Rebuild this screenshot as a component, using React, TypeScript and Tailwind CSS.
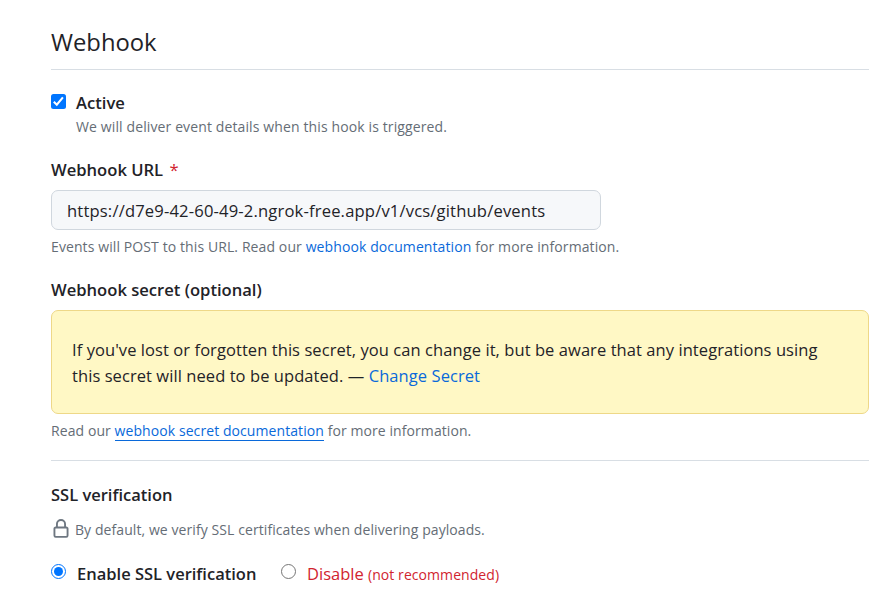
import React from "react";

function Link({ children, underlined = false }: { children: React.ReactNode; underlined?: boolean }) {
  return (
    <a className={underlined ? "inline-block h-[21px] border-b border-[#0969da] text-[#0969da]" : "text-[#0969da]"}>
      {children}
    </a>
  );
}

function LockIcon() {
  return (
    <svg width="20" height="20" viewBox="0 0 16 16" fill="#6e7781" className="shrink-0">
      <path d="M4 4a4 4 0 0 1 8 0v2h.25c.966 0 1.75.784 1.75 1.75v5.5A1.75 1.75 0 0 1 12.25 15h-8.5A1.75 1.75 0 0 1 2 13.25v-5.5C2 6.784 2.784 6 3.75 6H4Zm8.25 3.5h-8.5a.25.25 0 0 0-.25.25v5.5c0 .138.112.25.25.25h8.5a.25.25 0 0 0 .25-.25v-5.5a.25.25 0 0 0-.25-.25ZM10.5 6V4a2.5 2.5 0 1 0-5 0v2Z" />
    </svg>
  );
}

export default function App() {
  return (
    <main className="h-[595px] w-[876px] overflow-hidden bg-white pl-[51px] pr-[7px] font-['Open_Sans','Noto_Sans',sans-serif] font-normal whitespace-nowrap text-[#1f2328]">
      <h1 className="h-[70px] border-b border-[#d8dee4] pt-[26px] text-[23.8px] leading-[32px] font-normal">Webhook</h1>

      <div className="flex pt-[20px]">
        <span className="mt-[4px] flex size-[15px] shrink-0 items-center justify-center rounded-[2.5px] bg-[#0075ff]">
          <svg width="15" height="15" viewBox="0 0 15 15" fill="none" stroke="white" strokeWidth="2.1">
            <path d="M2.8 7.8 5.8 10.7 11.9 3.4" />
          </svg>
        </span>
        <div className="ml-[10px]">
          <div className="h-[26px] text-[16.6px] leading-[26px] font-semibold">Active</div>
          <div className="h-[22px] text-[14px] leading-[22px] tracking-[0.12px] text-[#656d76]">We will deliver event details when this hook is triggered.</div>
        </div>
      </div>

      <div className="mt-[19px] h-[26px] text-[16.6px] leading-[26px] font-semibold">
        Webhook URL <span className="ml-[2px] font-normal text-[#d1242f]">*</span>
      </div>
      <div className="mt-[7px] flex h-[40px] w-[550px] items-center rounded-[7px] border border-[#d0d7de] bg-[#f6f8fa] px-[15px] pt-[2px] text-[16.6px] tracking-[0.16px]">
        https://d7e9-42-60-49-2.ngrok-free.app/v1/vcs/github/events
      </div>
      <p className="mt-[6px] h-[22px] text-[14px] leading-[22px] tracking-[0.1px] text-[#656d76]">
        Events will POST to this URL. Read our <Link>webhook documentation</Link> for more information.
      </p>

      <div className="mt-[19px] h-[26px] text-[16.6px] leading-[26px] font-semibold">Webhook secret (optional)</div>
      <div className="mt-[7px] h-[104px] rounded-[7px] border border-[#eed888] bg-[#fff8c5] px-[20px] pt-[26px] text-[16.5px] leading-[26px] tracking-[0.07px]">
        <div>If you've lost or forgotten this secret, you can change it, but be aware that any integrations using</div>
        <div>this secret will need to be updated. — <Link>Change Secret</Link></div>
      </div>
      <p className="mt-[6px] h-[22px] text-[14px] leading-[22px] tracking-[0.08px] text-[#656d76]">
        Read our <Link underlined>webhook secret documentation</Link> for more information.
      </p>

      <div className="mt-[18px] h-px bg-[#d8dee4]" />

      <div className="mt-[21px] h-[26px] text-[16.5px] leading-[26px] font-semibold">SSL verification</div>
      <div className="mt-[11px] flex h-[22px] text-[14px] leading-[22px] tracking-[0.08px] text-[#656d76]">
        <span className="-ml-[0.5px] mr-[4.5px]"><LockIcon /></span>
        By default, we verify SSL certificates when delivering payloads.
      </div>

      <div className="mt-[19px] flex h-[28px] text-[16.5px] leading-[28px]">
        <span className="mt-[4px] flex size-[15px] items-center justify-center rounded-full border border-[#0075ff]">
          <span className="size-[9px] rounded-full bg-[#0075ff]" />
        </span>
        <span className="ml-[11px] w-[204px] font-semibold">Enable SSL verification</span>
        <span className="mt-[4px] size-[15px] rounded-full border border-[#767676]" />
        <span className="ml-[11px] text-[16.5px] text-[#d1242f]">
          Disable <span className="text-[14px] tracking-[0.07px]">(not recommended)</span>
        </span>
      </div>
    </main>
  );
}
